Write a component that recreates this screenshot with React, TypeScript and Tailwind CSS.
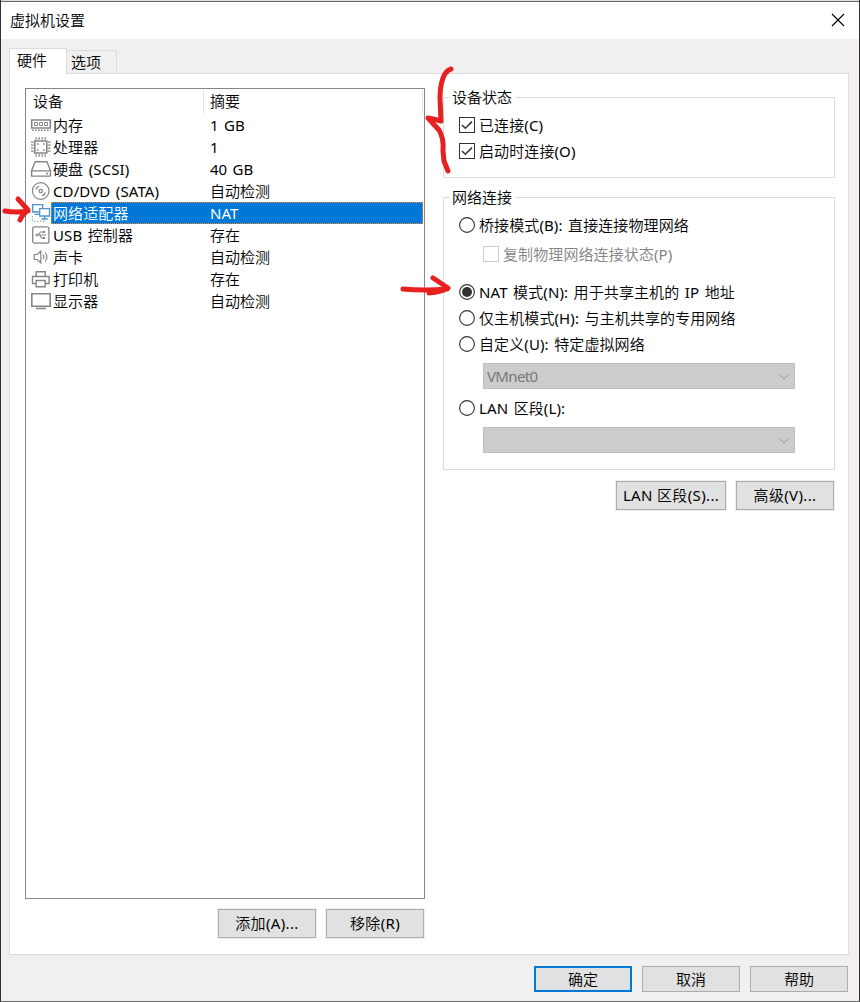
import type { ReactNode } from "react";

const G = "#858585";

function MemoryIcon() {
  return (
    <svg width="22" height="22" viewBox="0 0 22 22" fill="none" stroke={G}>
      <path d="M1.7 6h18.6v8H1.7z" strokeWidth="1.6" />
      <path d="M4.5 8.5h3v3h-3zM9.5 8.5h3v3h-3zM14.5 8.5h3v3h-3z" />
      <path d="M2 16.2h18.5" strokeWidth="1.6" strokeDasharray="1.7 1.3" />
    </svg>
  );
}
function CpuIcon() {
  return (
    <svg width="22" height="22" viewBox="0 0 22 22" fill="none" stroke={G}>
      <path d="M4.8 5h12v12h-12z" strokeWidth="1.6" />
      <path d="M5.5 2.5h11M5.5 19.5h11M2.3 5.5v11M19.3 5.5v11" strokeWidth="2.6" strokeDasharray="1.3 1.7" />
      <path d="M7 8h1.6M13 8h1.6M7 14h1.6M13 14h1.6" strokeWidth="1.5" />
    </svg>
  );
}
function DiskIcon() {
  return (
    <svg width="22" height="22" viewBox="0 0 22 22" fill="none" stroke={G} strokeWidth="1.4" strokeLinejoin="round">
      <path d="M5 3.7h12l3.4 9v5.4H1.6v-5.4zM1.6 12.9h18.8M16 15.5h2" />
    </svg>
  );
}
function DiscIcon() {
  return (
    <svg width="22" height="22" viewBox="0 0 22 22" fill="none" stroke={G} strokeWidth="1.2">
      <circle cx="10.7" cy="11" r="8.3" />
      <circle cx="10.7" cy="11" r="1.7" />
      <path d="M6 9.5Q6.8 7 9.2 6.2M15.4 12.5q-.8 2.5-3.2 3.3" strokeWidth="1.4" />
    </svg>
  );
}
function NetworkIcon() {
  return (
    <svg width="22" height="22" viewBox="0 0 22 22" fill="none" stroke="#4a94cf" strokeWidth="1.3">
      <path d="M9 10H2.7V2.7h10V6M4.5 12.3H9" />
      <path d="M9.7 6.7h9.8v7.3H9.7zM14.6 14v2.8M11.5 17h6.3" fill="#fff" />
      <path d="M2.5 14v5M4 19.3h10.5" stroke="#aaa" strokeDasharray="1.5 1.5" />
    </svg>
  );
}
function UsbIcon() {
  return (
    <svg width="22" height="22" viewBox="0 0 22 22" fill="none" stroke={G} strokeWidth="1.3">
      <rect x="2.7" y="2.8" width="16.2" height="16.4" rx="2" />
      <path d="M6 11h10M8 11l2.5-3H13M9.5 11l2 3H14" strokeWidth="1.1" />
      <path d="m5 11 2.5-1.8v3.6zM13 7h2v2h-2zM13 13h2v2h-2z" fill={G} stroke="none" />
    </svg>
  );
}
function SoundIcon() {
  return (
    <svg width="22" height="22" viewBox="0 0 22 22" fill="none" stroke={G} strokeWidth="1.2">
      <path d="M4.2 8.5h2.9l3.7-3.3v11.6l-3.7-3.3H4.2z" />
      <path d="M13 8.8q1.7 2.2 0 4.4M15.2 6.5q3.3 4.5 0 9" />
    </svg>
  );
}
function PrinterIcon() {
  return (
    <svg width="22" height="22" viewBox="0 0 22 22" fill="none" stroke={G} strokeWidth="1.4">
      <path d="M6.2 8.5V3.7h9v4.8M6.2 15.5H2.5v-7h16.6v7h-3.9" />
      <path d="M6.2 12.5h9v6.3h-9z" />
    </svg>
  );
}
function DisplayIcon() {
  return (
    <svg width="22" height="22" viewBox="0 0 22 22" fill="none" stroke={G}>
      <path d="M1.8 3.8h18.4v12.5H1.8z" strokeWidth="1.6" />
      <path d="M6 18.5h10" strokeWidth="1.5" />
    </svg>
  );
}

const devices: { name: string; summary: string; icon: ReactNode; selected?: boolean }[] = [
  { name: "内存", summary: "1 GB", icon: <MemoryIcon /> },
  { name: "处理器", summary: "1", icon: <CpuIcon /> },
  { name: "硬盘 (SCSI)", summary: "40 GB", icon: <DiskIcon /> },
  { name: "CD/DVD (SATA)", summary: "自动检测", icon: <DiscIcon /> },
  { name: "网络适配器", summary: "NAT", icon: <NetworkIcon />, selected: true },
  { name: "USB 控制器", summary: "存在", icon: <UsbIcon /> },
  { name: "声卡", summary: "自动检测", icon: <SoundIcon /> },
  { name: "打印机", summary: "存在", icon: <PrinterIcon /> },
  { name: "显示器", summary: "自动检测", icon: <DisplayIcon /> },
];

function Button({ children, className = "" }: { children: ReactNode; className?: string }) {
  return (
    <button className={`flex items-center justify-center whitespace-nowrap border bg-[#e1e1e1] ${className}`}>
      {children}
    </button>
  );
}

const panelButton = "h-[29px] border-[#adadad] pb-[2px] tracking-[0.35px] shadow-[0_0_0_1px_#f0f0f0]";

function Check({ children, disabled }: { children: ReactNode; disabled?: boolean }) {
  return (
    <label className={`flex h-[26px] items-center gap-1 whitespace-nowrap tracking-[0.1px] ${disabled ? "text-[#838383]" : ""}`}>
      <span className={`block size-4 shrink-0 border bg-white ${disabled ? "border-[#ccc]" : "border-[#333]"}`}>
        {!disabled && (
          <svg width="14" height="14" viewBox="0 0 14 14" fill="none" stroke="#333" strokeWidth="1.5">
            <path d="m2 7 3.3 3.3L12 3.6" />
          </svg>
        )}
      </span>
      {children}
    </label>
  );
}

function Radio({ children, checked }: { children: ReactNode; checked?: boolean }) {
  return (
    <label className="flex h-[26px] items-center gap-1 whitespace-nowrap tracking-[0.1px]">
      <svg className="shrink-0" width="16" height="16" viewBox="0 0 16 16">
        <circle cx="8" cy="8" r="7.4" fill="#fff" stroke="#333" strokeWidth="1.1" />
        {checked && <circle cx="8" cy="8" r="5" fill="#333" />}
      </svg>
      {children}
    </label>
  );
}

function Combo({ value, className = "" }: { value?: string; className?: string }) {
  return (
    <div className={`ml-6 flex h-[26px] w-[312px] items-center justify-between border border-[#bfbfbf] bg-[#ccc] pl-[3px] pr-[5px] text-[#787878] ${className}`}>
      <span className="tracking-[-0.65px]">{value}</span>
      <svg className="mt-px" width="10" height="6" viewBox="0 0 10 6" fill="none" stroke="#9b9b9b">
        <path d="m.5.5 4.5 4.5L9.5.5" />
      </svg>
    </div>
  );
}

function Group({ title, className = "", children }: { title: string; className?: string; children: ReactNode }) {
  return (
    <section className={`flex w-[392px] flex-col border border-[#dcdcdc] pl-[15px] ${className}`}>
      <h2 className="-ml-[9px] -mt-[12px] mb-[6px] h-[22px] w-fit bg-white pl-[2px] pr-1 leading-[22px]">{title}</h2>
      {children}
    </section>
  );
}

export default function App() {
  return (
    <div className="relative flex h-[1002px] w-[860px] flex-col overflow-hidden border-x border-b border-x-[#3a2a36] border-b-[#666] bg-[#f0f0f0] font-['Noto_Sans','Noto_Sans_CJK_SC_DemiLight','Noto_Sans_CJK_SC_Light','Noto_Sans_CJK_SC',sans-serif] text-[15px] leading-[22px] text-black [word-spacing:1.5px]">
      <div className="h-px shrink-0 bg-[#ddd]" />
      <header className="flex h-[38px] shrink-0 items-center justify-between border-t border-[#666] bg-white pl-[9px] pr-[14px]">
        <h1 className="-mt-[2px]">虚拟机设置</h1>
        <svg className="-mt-px" width="14" height="14" viewBox="0 0 14 14" stroke="#000" strokeWidth="1.1">
          <path d="m1 1 12 12M13 1 1 13" />
        </svg>
      </header>

      <nav className="mt-[9px] flex h-[25px] shrink-0 items-end pl-2">
        <div className="relative z-10 -mb-px h-[26px] w-[58px] shrink-0 border border-b-0 border-[#dcdcdc] bg-white pl-[7px]">硬件</div>
        <div className="h-[23px] w-[50px] border border-b-0 border-l-0 border-[#dcdcdc] pl-1">选项</div>
      </nav>

      <main className="ml-2 flex h-[882px] w-[840px] shrink-0 border border-[#dcdcdc] bg-white pl-[15px] pt-[14px]">
        <section className="w-[400px]">
          <div className="h-[811px] border border-[#828790] pt-px">
            <div className="flex h-6 leading-[23px]">
              <div className="w-[178px] border-r border-[#e5e5e5] pl-[7px]">设备</div>
              <div className="w-[219px] border-r border-[#e5e5e5] pl-[6px]">摘要</div>
            </div>
            <ul>
              {devices.map((d) => (
                <li key={d.name} className="flex h-[22px] pl-1">
                  <span className="w-[21px] shrink-0">{d.icon}</span>
                  <div
                    className={`flex w-[372px] border pl-px leading-5 ${
                      d.selected ? "relative border-dotted border-[#ff8728] bg-[#0078d7] text-white" : "border-transparent"
                    }`}
                  >
                    <span className="w-[157px] whitespace-nowrap tracking-[0.1px]">{d.name}</span>
                    <span>{d.summary}</span>
                  </div>
                </li>
              ))}
            </ul>
          </div>
          <div className="mt-[10px] flex justify-end gap-[10px] pr-px">
            <Button className={`w-[98px] ${panelButton}`}>添加(A)...</Button>
            <Button className={`w-[98px] ${panelButton}`}>移除(R)</Button>
          </div>
        </section>

        <section className="ml-[18px] pt-[9px]">
          <Group title="设备状态" className="h-[81px]">
            <div className="-mt-[2px]">
              <Check>已连接(C)</Check>
              <Check>启动时连接(O)</Check>
            </div>
          </Group>
          <Group title="网络连接" className="mt-[19px] h-[273px]">
            <div className="-mt-[2px]">
              <Radio>桥接模式(B): 直接连接物理网络</Radio>
              <div className="ml-6 mt-[3px]">
                <Check disabled>复制物理网络连接状态(P)</Check>
              </div>
              <div className="mt-3">
                <Radio checked>NAT 模式(N): 用于共享主机的 IP 地址</Radio>
                <Radio>仅主机模式(H): 与主机共享的专用网络</Radio>
                <Radio>自定义(U): 特定虚拟网络</Radio>
              </div>
              <Combo value="VMnet0" className="mt-[6px]" />
              <div className="mt-[6px]">
                <Radio>LAN 区段(L):</Radio>
              </div>
              <Combo className="mt-[6px]" />
            </div>
          </Group>
          <div className="mt-[11px] flex justify-end gap-[10px] pr-px">
            <Button className={`w-[110px] ${panelButton}`}>LAN 区段(S)...</Button>
            <Button className={`w-[98px] ${panelButton}`}>高级(V)...</Button>
          </div>
        </section>
      </main>

      <footer className="mt-[11px] flex justify-end gap-[10px] pr-[11px]">
        <Button className="h-[26px] w-[98px] border-2 border-[#0078d7]">确定</Button>
        <Button className="h-[26px] w-[98px] border-[#adadad]">取消</Button>
        <Button className="h-[26px] w-[98px] border-[#adadad]">帮助</Button>
      </footer>

      <svg
        className="pointer-events-none absolute -left-px top-0 z-20"
        width="460"
        height="310"
        viewBox="0 0 460 310"
        fill="none"
        stroke="#e8201f"
        strokeWidth="5"
        strokeLinecap="round"
        strokeLinejoin="round"
      >
        <path d="M451 69C443 71 440 85 440 99L441 121Q434 119 428 118L439 130Q444 138 443 151L444 161L448 171" />
        <path d="M5 211Q16 213 28 211M18 199L28 210Q22 215 20 220" />
        <path d="M403 289Q425 291 447 289M433 278L448 288Q442 292 429 293" />
      </svg>
    </div>
  );
}
